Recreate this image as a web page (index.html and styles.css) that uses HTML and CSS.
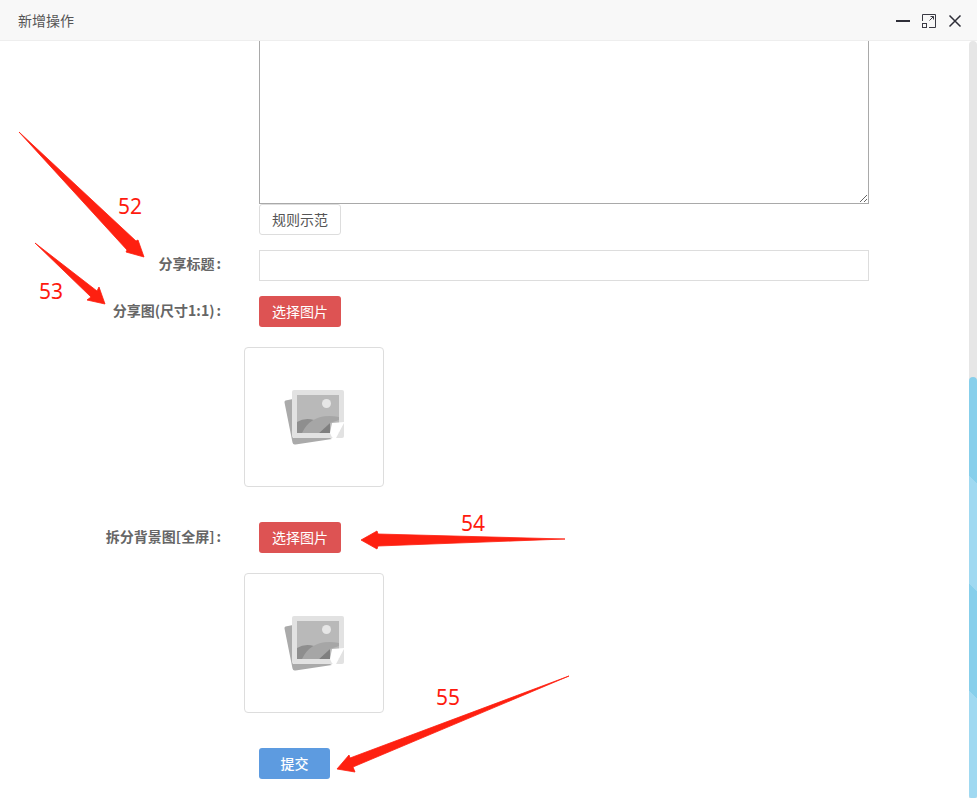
FILE: index.html
```html
<!DOCTYPE html>
<html lang="zh">
<head>
<meta charset="utf-8">
<title>新增操作</title>
<link rel="stylesheet" href="styles.css">
</head>
<body>
<svg class="defs" width="0" height="0" aria-hidden="true">
  <defs>
    <filter id="soft"><feGaussianBlur stdDeviation="0.45"/></filter>
    <symbol id="placeholder" viewBox="0 0 70 65">
      <g filter="url(#soft)">
        <path d="M5.500 15.500 L13 14 L13 53 L50 53 L52 54 L15.500 59.500 Q13 60 12.500 57.500 L4.500 17.500 Q4.300 15.800 5.500 15.500Z" fill="#aaaaaa"/>
        <rect x="12" y="5" width="52" height="48" rx="2" fill="#e2e2e2"/>
        <rect x="17" y="10" width="42" height="38" fill="#b9b9b9"/>
        <circle cx="46.500" cy="18.500" r="4.500" fill="#e6e6e6"/>
        <path d="M17 37 Q25 32 34 35 L23 48 L17 48Z" fill="#8e8e8e"/>
        <path d="M22 48 Q32 27 59 32 L59 35 L50 38 L39 48Z" fill="#a6a6a6"/>
        <path d="M39 48 L50 38 L50 48Z" fill="#7f7f7f"/>
        <path d="M50 48 L52 38 L64.500 37 L55 55 Q51 52 50 48Z" fill="#ffffff"/>
      </g>
    </symbol>
  </defs>
</svg>
<div class="window">
  <header class="titlebar">
    <span class="title">新增操作</span>
    <div class="controls">
      <svg class="ctl" width="16" height="16" viewBox="0 0 16 16" aria-hidden="true"><path d="M1 8h14" stroke="#2e2e38" stroke-width="2"/></svg>
      <svg class="ctl" width="16" height="16" viewBox="0 0 16 16" aria-hidden="true"><path d="M1.500 8V1.500H14.500V14.500H8M8.500 7.500L12.500 3.500M9.500 3.500H12.500V6.500" fill="none" stroke="#3a3a44"/><rect x="1.500" y="10.500" width="4" height="4" fill="none" stroke="#3a3a44"/></svg>
      <svg class="ctl" width="16" height="16" viewBox="0 0 16 16" aria-hidden="true"><path d="M2.500 2.500L13.500 13.500M13.500 2.500L2.500 13.500" stroke="#2e2e38" stroke-width="1.500"/></svg>
    </div>
  </header>
  <div class="pane">
    <main class="form">
      <div class="row">
        <div class="label"></div>
        <div class="stack">
          <textarea class="rules"></textarea>
          <button class="btn btn-plain" type="button">规则示范</button>
        </div>
      </div>
      <div class="row row-title">
        <label class="label">分享标题<span class="colon">:</span></label>
        <input class="field" type="text">
      </div>
      <div class="row row-share">
        <label class="label">分享图(尺寸1:1)<span class="colon">:</span></label>
        <button class="btn btn-red" type="button">选择图片</button>
      </div>
      <div class="thumb"><svg class="thumb-img" width="70" height="65"><use href="#placeholder"/></svg></div>
      <div class="row row-bg">
        <label class="label">拆分背景图[全屏]<span class="colon">:</span></label>
        <button class="btn btn-red" type="button">选择图片</button>
      </div>
      <div class="thumb"><svg class="thumb-img" width="70" height="65"><use href="#placeholder"/></svg></div>
      <div class="row row-submit">
        <div class="label"></div>
        <button class="btn btn-blue" type="button">提交</button>
      </div>
    </main>
    <div class="scrollbar"><div class="thumb-bar"></div></div>
  </div>
</div>
<svg class="arrows" width="977" height="798" aria-hidden="true">
  <path d="M19 132L136 241L138 240L144 257L126 252L127 250Z"/>
  <path d="M35 243L97 291L99 287L105 304L87 300L91 297Z"/>
  <path d="M565 539L378 534L377 531L361 540L377 549L378 546Z"/>
  <path d="M569 676L350 758L349 755L337 769L355 772L353 767Z"/>
</svg>
<span class="note note-52">52</span>
<span class="note note-53">53</span>
<span class="note note-54">54</span>
<span class="note note-55">55</span>
</body>
</html>
```
FILE: styles.css
```css
* { box-sizing: border-box; }
html, body { margin: 0; padding: 0; }
body {
  width: 977px;
  height: 798px;
  overflow: hidden;
  position: relative;
  background: #fff;
  font-family: "Noto Sans CJK SC", "Noto Sans", sans-serif;
  color: #666;
}
.defs { position: absolute; }
.window { display: flex; flex-direction: column; height: 798px; }
.titlebar {
  height: 41px;
  flex: none;
  display: flex;
  align-items: center;
  justify-content: space-between;
  padding: 0 14px 0 18px;
  background: #f8f8f8;
  border-bottom: 1px solid #eeeeee;
}
.title { font-size: 14px; color: #555; }
.controls { display: flex; gap: 10px; padding-top: 2px; }
.ctl { display: block; }
.pane { flex: 1; display: flex; min-height: 0; }
.form { flex: 1; min-width: 0; }
.row { display: flex; align-items: flex-start; }
.label {
  width: 221px;
  margin-right: 38px;
  flex: none;
  text-align: right;
  font-size: 14px;
  font-weight: 700;
  line-height: 18px;
  color: #666;
  white-space: nowrap;
}
.colon { padding-left: 2px; }
.stack { display: flex; flex-direction: column; align-items: flex-start; }
.rules {
  display: block;
  width: 610px;
  height: 163px;
  border: 1px solid #a9a9a9;
  border-top: 0;
  border-radius: 0;
  margin: 0;
  padding: 0;
  background: #fff;
}
.btn {
  display: block;
  height: 31px;
  margin: 0;
  padding: 0 12px;
  border-radius: 3px;
  font-family: inherit;
  font-size: 14px;
  line-height: 29px;
  border: 1px solid transparent;
  white-space: nowrap;
}
.btn-plain { background: #fff; border-color: #dddddd; color: #555; }
.btn-red { background: #dd5353; color: #fff; }
.btn-blue { background: #5d9be0; color: #fff; width: 71px; padding: 0; font-weight: 500; }
.row-title { margin-top: 15px; }
.row-title .label { padding-top: 4px; }
.field {
  display: block;
  width: 610px;
  height: 31px;
  border: 1px solid #dddddd;
  background: #fff;
  margin: 0;
  padding: 0 6px;
}
.row-share { margin-top: 15px; }
.row-share .label { padding-top: 5px; }
.row-bg { margin-top: 35px; }
.row-bg .label { padding-top: 5px; }
.row-submit { margin-top: 35px; }
.thumb {
  width: 140px;
  height: 140px;
  margin: 20px 0 0 244px;
  border: 1px solid #dddddd;
  border-radius: 4px;
  background: #fff;
  display: flex;
  align-items: flex-start;
  padding: 37px 0 0 35px;
}
.thumb-img { display: block; flex: none; }
.scrollbar {
  width: 8px;
  flex: none;
  background: #e6e6e6;
  border-radius: 4px 4px 0 0;
  padding-top: 336px;
}
.thumb-bar {
  height: 421px;
  border-radius: 4px 4px 2px 2px;
  background-image: repeating-linear-gradient(45deg, #a0d9f1 0 76px, #87cfeb 76px 152px);
}
.arrows { position: absolute; left: 0; top: 0; pointer-events: none; }
.arrows path { fill: #fe2010; stroke: #fe2010; stroke-width: 0.8px; stroke-linejoin: round; }
.note {
  position: absolute;
  font-family: "Noto Sans", sans-serif;
  font-size: 21px;
  line-height: 28px;
  color: #fe1a0e;
}
.note-52 { left: 118px; top: 192px; }
.note-53 { left: 39px; top: 277px; }
.note-54 { left: 461px; top: 509px; }
.note-55 { left: 436px; top: 683px; }
```
